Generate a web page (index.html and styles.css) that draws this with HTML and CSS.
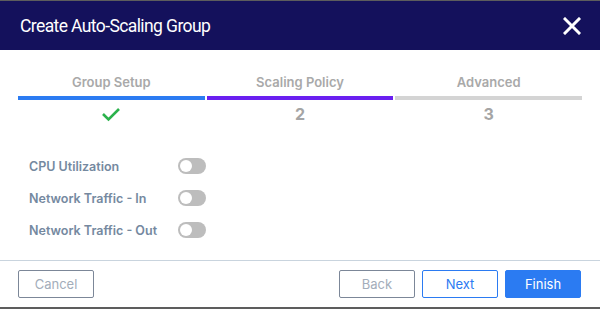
FILE: index.html
```html
<!DOCTYPE html>
<html>
<head>
<meta charset="utf-8">
<link rel="stylesheet" href="styles.css">
</head>
<body>
<div class="dialog">
  <div class="header">
    <div class="title">Create Auto-Scaling Group</div>
    <svg class="close" width="18" height="18" viewBox="0 0 18 18"><path d="M2 2L16 16M16 2L2 16" stroke="#fff" stroke-width="3" stroke-linecap="square"/></svg>
  </div>
  <div class="content">
    <div class="steps">
      <div class="step">
        <div class="step-label">Group Setup</div>
        <div class="bar bar-blue"></div>
        <div class="step-mark"><svg width="20" height="16" viewBox="0 0 20 16"><path d="M2 8L7.5 13.5L18 3" fill="none" stroke="#2bb24c" stroke-width="2.6"/></svg></div>
      </div>
      <div class="step">
        <div class="step-label">Scaling Policy</div>
        <div class="bar bar-purple"></div>
        <div class="step-mark">2</div>
      </div>
      <div class="step">
        <div class="step-label">Advanced</div>
        <div class="bar bar-gray"></div>
        <div class="step-mark">3</div>
      </div>
    </div>
    <div class="options">
      <div class="option"><span class="opt-label">CPU Utilization</span><span class="toggle"><span class="knob"></span></span></div>
      <div class="option"><span class="opt-label">Network Traffic - In</span><span class="toggle"><span class="knob"></span></span></div>
      <div class="option"><span class="opt-label">Network Traffic - Out</span><span class="toggle"><span class="knob"></span></span></div>
    </div>
  </div>
  <div class="footer">
    <button class="btn btn-outline">Cancel</button>
    <div class="right">
      <button class="btn btn-outline">Back</button>
      <button class="btn btn-next">Next</button>
      <button class="btn btn-primary">Finish</button>
    </div>
  </div>
</div>
</body>
</html>
```
FILE: styles.css
```css
html, body {
  margin: 0;
  padding: 0;
}
body {
  background: #5d5d5d;
  width: 600px;
  height: 309px;
  overflow: hidden;
  padding-top: 1px;
  box-sizing: border-box;
  font-family: "Inter", "Roboto", sans-serif;
}
.dialog {
  background: #fff;
  height: 306px;
  display: flex;
  flex-direction: column;
}
.header {
  height: 49px;
  background: #14115c;
  display: flex;
  align-items: center;
  justify-content: space-between;
  padding: 0 19px 0 20px;
  flex-shrink: 0;
}
.title {
  color: #fff;
  font-family: "Roboto", sans-serif;
  font-size: 17.5px;
  font-weight: 400;
  letter-spacing: -0.6px;
}
.close {
  display: block;
}
.content {
  flex: 1;
  padding: 24px 18px 0 18px;
}
.steps {
  display: flex;
  gap: 2px;
}
.step {
  flex: 1;
  display: flex;
  flex-direction: column;
  align-items: center;
}
.step-label {
  font-size: 13px;
  font-weight: 600;
  color: #a9a9a9;
  height: 16px;
  line-height: 16px;
}
.bar {
  align-self: stretch;
  height: 4px;
  margin-top: 6px;
}
.bar-blue { background: #2b7bf2; }
.bar-purple { background: #6a1ff0; }
.bar-gray { background: #d4d4d4; }
.step-mark {
  height: 22px;
  margin-top: 3px;
  display: flex;
  align-items: center;
  justify-content: center;
  font-size: 16px;
  font-weight: 700;
  color: #a5a5a5;
}
.step-mark svg { display: block; }
.options {
  margin-top: 32px;
  padding-left: 11px;
  display: flex;
  flex-direction: column;
  gap: 14px;
}
.option {
  display: grid;
  grid-template-columns: 149px 28px;
  align-items: center;
  height: 18px;
}
.opt-label {
  font-size: 12.5px;
  font-weight: 600;
  color: #7589a0;
}
.toggle {
  width: 28px;
  height: 16px;
  border-radius: 8px;
  background: #bdbdbd;
  position: relative;
}
.knob {
  position: absolute;
  left: 2px;
  top: 2px;
  width: 12px;
  height: 12px;
  border-radius: 50%;
  background: #fff;
}
.footer {
  border-top: 1px solid #c9d4de;
  height: 47px;
  flex-shrink: 0;
  display: flex;
  align-items: flex-start;
  justify-content: space-between;
  padding: 9px 19px 0 18px;
  box-sizing: border-box;
}
.right {
  display: flex;
  gap: 7px;
}
.btn {
  width: 76px;
  height: 28px;
  border-radius: 2px;
  font-family: "Inter", "Roboto", sans-serif;
  font-size: 13px;
  background: #fff;
  padding: 0;
  cursor: pointer;
}
.btn-outline {
  border: 1px solid #7c8798;
  color: #a3adba;
}
.btn-next {
  border: 1px solid #2b7bf2;
  color: #2b7bf2;
}
.btn-primary {
  border: 1px solid #2b7bf2;
  background: #2b7bf2;
  color: #fff;
}
```
